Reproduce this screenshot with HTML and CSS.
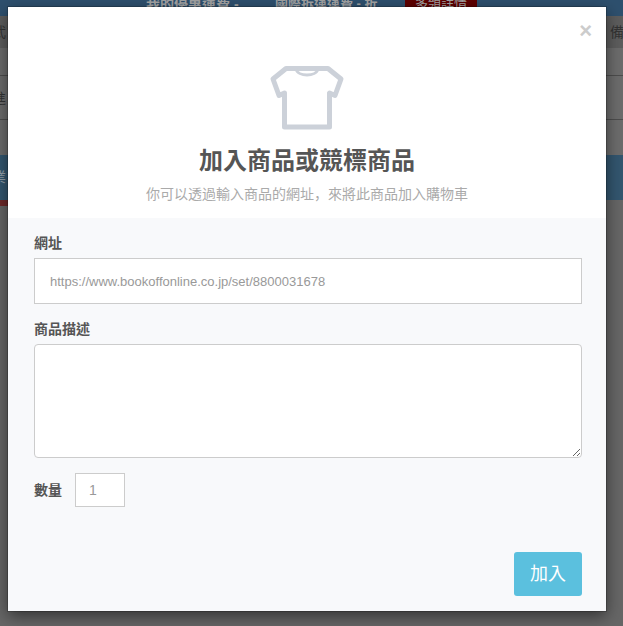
FILE: index.html
```html
<!DOCTYPE html>
<html lang="zh-Hant">
<head>
<meta charset="UTF-8" />
<meta name="viewport" content="width=device-width, initial-scale=1" />
<title>加入商品或競標商品</title>
<link rel="stylesheet" href="styles.css">
</head>
<body>

<!-- page dimmed behind the dialog -->
<div class="page">
  <div class="top-bar">
    <span class="top-link">我的優惠運費 -</span>
    <span class="top-link top-link-2">國際拆運運費 - 折</span>
    <span class="top-tag">多領詳情</span>
  </div>
  <div class="tabs">
    <span>武</span>
    <span>備</span>
  </div>
  <div class="row row-short"></div>
  <div class="row row-tall"><span>進</span></div>
  <div class="row row-last"></div>
  <div class="blue-band"><span>業</span></div>
  <div class="red-line"></div>
</div>

<div class="modal">
  <div class="modal-head">
    <span class="close">×</span>
    <svg class="shirt" width="74" height="64" viewBox="0 0 74 64" fill="none" stroke="#ccd1d9" stroke-width="5" stroke-linejoin="round">
      <path d="M16 2.500H58L71 13L65 29.500L59.500 27V61H14.500V27L9 29.500L3 13Z"/>
      <path d="M26 3C28 11 46 11 48 3" stroke-width="3"/>
    </svg>
    <h1>加入商品或競標商品</h1>
    <p lang="zh-Hans">你可以透過輸入商品的網址，來將此商品加入購物車</p>
  </div>
  <div class="modal-body">
    <label class="field-label">網址</label>
    <input class="url-input" type="text" placeholder="https://www.bookoffonline.co.jp/set/8800031678">
    <label class="field-label">商品描述</label>
    <textarea class="desc-input"></textarea>
    <div class="qty-row">
      <label class="qty-label">數量</label>
      <input class="qty-input" type="text" placeholder="1">
    </div>
    <div class="actions">
      <div class="btn">加入</div>
    </div>
  </div>
</div>

</body>
</html>
```

FILE: styles.css
```css
* {
  box-sizing: border-box;
}
html, body {
  height: 100%;
}
body {
  margin: 0;
  overflow: hidden;
  font-family: "Liberation Sans", "Noto Sans CJK TC", sans-serif;
  background: #666;
  color: #555;
}

.page {
  height: 100%;
  overflow: hidden;
  background: #666;
}
.top-bar {
  display: flex;
  height: 16px;
  padding-left: 146px;
  overflow: hidden;
  background: #2e506e;
  color: #a3a3a3;
  font-size: 14px;
  font-weight: 700;
  line-height: 8px;
}
.top-link {
  width: 129px;
  white-space: nowrap;
}
.top-link-2 {
  width: 130px;
  font-size: 13px;
}
.top-tag {
  width: 72px;
  background: #5e0000;
  font-size: 13px;
  font-weight: 400;
  text-align: center;
  white-space: nowrap;
}
.tabs {
  display: flex;
  justify-content: space-between;
  height: 32px;
  margin: 0 -1px 0 -8px;
  background: #5d5d5d;
  color: #333;
  font-size: 14px;
  line-height: 32px;
}
.row {
  border-bottom: 1px solid #4d4d4d;
  background: #6c6c6c;
  color: #333;
  font-size: 14px;
}
.row-short {
  height: 28px;
}
.row-tall {
  height: 44px;
  margin-left: -8px;
  line-height: 44px;
}
.row-last {
  height: 35px;
  border-bottom: 0;
}
.blue-band {
  height: 45px;
  margin-left: -8px;
  background: #33566f;
  color: #94a0aa;
  font-size: 14px;
  line-height: 45px;
}
.red-line {
  width: 100px;
  height: 6px;
  background: #6e2a2a;
}

/* dialog */
.modal {
  position: absolute;
  left: 8px;
  top: 7px;
  width: 598px;
  height: 604px;
  display: flex;
  flex-direction: column;
  background: #fff;
  box-shadow: 0 0 0 1px rgb(0 0 0 / 0.2), 0 5px 15px rgb(0 0 0 / 0.5);
}
.modal-head {
  position: relative;
  height: 211px;
  padding-top: 59px;
  text-align: center;
}
.close {
  position: absolute;
  top: 12px;
  right: 14px;
  color: #ccc;
  font-size: 22px;
  font-weight: 700;
  line-height: 24px;
}
.shirt {
  display: block;
  margin: 0 auto;
}
.modal-head h1 {
  margin: 15px 0 0;
  color: #555;
  font-size: 24px;
  font-weight: 700;
  line-height: 32px;
}
.modal-head p {
  margin: 7px 0 0;
  color: #aaa;
  font-family: "Liberation Sans", "Noto Sans CJK SC", sans-serif;
  font-size: 14px;
  line-height: 20px;
}
.modal-body {
  flex: 1;
  display: flex;
  flex-direction: column;
  padding: 15px 24px 15px 26px;
  background: #f8f9fb;
}
.field-label, .qty-label {
  color: #555;
  font-size: 14px;
  font-weight: 700;
  line-height: 20px;
}
.field-label {
  margin-bottom: 5px;
}
.url-input {
  height: 46px;
  margin-bottom: 15px;
  padding: 0 15px;
  border: 1px solid #ccc;
  background: #fff;
  font-family: inherit;
  font-size: 13px;
}
.desc-input {
  height: 114px;
  margin-bottom: 15px;
  border: 1px solid #ccc;
  border-radius: 4px;
  background: #fff;
}
input::placeholder {
  color: #999;
  opacity: 1;
}
.qty-row {
  display: flex;
  align-items: center;
  gap: 13px;
}
.qty-input {
  width: 50px;
  height: 34px;
  padding: 0 13px;
  border: 1px solid #ccc;
  background: #fff;
  font-family: inherit;
  font-size: 14px;
}
.actions {
  display: flex;
  justify-content: flex-end;
  margin-top: auto;
}
.btn {
  width: 68px;
  height: 44px;
  border-radius: 3px;
  background: #5bc0de;
  color: #fff;
  font-size: 18px;
  line-height: 44px;
  text-align: center;
}
```
